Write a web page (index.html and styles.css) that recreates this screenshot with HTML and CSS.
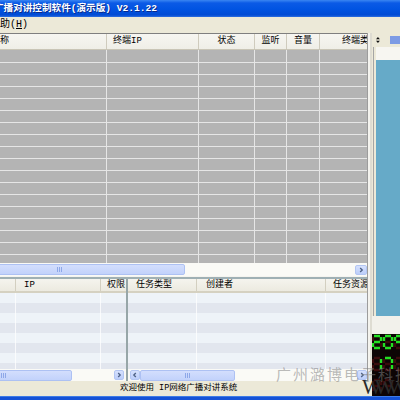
FILE: index.html
```html
<!DOCTYPE html>
<html>
<head>
<meta charset="utf-8">
<link rel="stylesheet" href="styles.css">
</head>
<body>
<div class="titlebar"><span class="title">广播对讲控制软件(演示版) V2.1.22</span></div>
<div class="menubar"><span class="menu">帮助(<u>H</u>)</span></div>
<div class="content">
  <div class="leftwrap">
    <div class="work">
      <div class="leftcol">
        <div class="ghead">
          <div class="hc h1">名称</div>
          <div class="hc h2">终端IP</div>
          <div class="hc hcen">状态</div>
          <div class="hc hcen">监听</div>
          <div class="hc hcen">音量</div>
          <div class="hc h6">终端类型</div>
        </div>
        <div class="gbody">
          <div class="gc"></div><div class="gc"></div><div class="gc"></div><div class="gc"></div><div class="gc"></div><div class="gc last"></div>
        </div>
        <div class="hscroll">
          <div class="thumb t-up"><span class="grip"></span></div>
          <div class="track"></div>
          <div class="sbtn"><svg width="12" height="10" viewBox="0 0 12 10"><path d="M5 2.5L7.5 5L5 7.5" fill="none" stroke="#4d6185" stroke-width="1.6"/></svg></div>
        </div>
        <div class="hsplit"></div>
        <div class="lower">
          <div class="lp">
            <div class="lhead lhead-l">
              <div class="lh"></div>
              <div class="lh pad8">IP</div>
              <div class="lh pad6">权限</div>
            </div>
            <div class="lrows lrows-l"><div class="lc"></div><div class="lc"></div><div class="lc last"></div></div>
            <div class="lscroll">
              <div class="thumb t-ll"><span class="grip"></span></div>
              <div class="track"></div>
              <div class="sbtn"><svg width="10" height="10" viewBox="0 0 10 10"><path d="M4 2.5L6.5 5L4 7.5" fill="none" stroke="#4d6185" stroke-width="1.6"/></svg></div>
            </div>
          </div>
          <div class="vsplit"></div>
          <div class="rp">
            <div class="lhead lhead-r">
              <div class="lh pad8">任务类型</div>
              <div class="lh pad9">创建者</div>
              <div class="lh pad7">任务资源</div>
            </div>
            <div class="lrows lrows-r"><div class="lc"></div><div class="lc"></div><div class="lc last"></div></div>
            <div class="lscroll rscroll">
              <div class="sbtn"><svg width="10" height="10" viewBox="0 0 10 10"><path d="M6 2.5L3.5 5L6 7.5" fill="none" stroke="#4d6185" stroke-width="1.6"/></svg></div>
              <div class="thumb t-rl"><span class="grip"></span></div>
              <div class="track"></div>
              <div class="sbtn"><svg width="10" height="10" viewBox="0 0 10 10"><path d="M4 2.5L6.5 5L4 7.5" fill="none" stroke="#4d6185" stroke-width="1.6"/></svg></div>
            </div>
          </div>
        </div>
      </div>
      <div class="strip"></div>
    </div>
    <div class="status"><span class="stext">欢迎使用 IP网络广播对讲系统</span></div>
  </div>
  <div class="side">
    <div class="shead">
      <svg class="sicon" width="5" height="8" viewBox="0 0 5 8"><path d="M2.5 0L5 3H0Z M0 5H5L2.5 8Z" fill="#111"/></svg>
      <div class="sbar"></div>
    </div>
    <div class="sbox">
      <div class="swhite"></div>
      <div class="teal"></div>
    </div>
    <div class="slight"></div>
    <div class="led">
      <svg width="28" height="62" viewBox="0 0 28 62">
        <path d="M2 2H8M9 3V7M9 9V13M2 14H8M1 9V13M1 3V7M2 8H8 M13 2H19M20 3V7M20 9V13M13 14H19M12 9V13M12 3V7M13 8H19 M24 2H30M23 9V13M23 3V7M24 8H30M24 14H30 M2 24H8M9 25V29M9 31V35M2 36H8M1 31V35M1 25V29M2 30H8 M13 24H19M20 25V29M20 31V35M13 36H19M12 31V35M12 25V29M13 30H19 M24 24H30M23 31V35M23 25V29M24 30H30M24 36H30 M2 46H8M9 47V51M9 53V57M1 53V57M1 47V51M2 52H8M13 46H19M20 47V51M12 47V51M13 52H19" fill="none" stroke="#3a0c0c" stroke-width="2.4"/>
        <path d="M2 2H8M9 3V7M2 8H8M1 9V13M2 14H8 M13 2H19M20 3V7M20 9V13M13 14H19M12 9V13M12 3V7 M24 2H30M23 3V7M24 8H30 M9 25V29M9 31V35 M13 24H19M20 25V29M20 31V35" fill="none" stroke="#22e022" stroke-width="2.4"/>
      </svg>
    </div>
  </div>
</div>
<div class="taskbar"></div>
<div class="wm">广州潞博电子科技</div>
<div class="www">WWW</div>
</body>
</html>
```
FILE: styles.css
```css
* { box-sizing: border-box; margin: 0; padding: 0; }
html, body { width: 400px; height: 400px; overflow: hidden; }
body {
  position: relative;
  background: #ECE9D8;
  font-family: "Liberation Mono", "Noto Sans CJK SC", monospace;
  font-size: 9px;
  color: #000;
}
.titlebar {
  height: 17px;
  background: linear-gradient(#3a86f2 0, #0b5ae6 3px, #0154e2 9px, #014bd4 15px, #2f6fe0 17px);
  color: #fff;
  font-weight: bold;
  font-size: 9.6px;
  line-height: 17px;
  white-space: nowrap;
  overflow: hidden;
}
.title { display: inline-block; margin-left: -6px; letter-spacing: 0; text-shadow: 1px 1px 0 #0a2a8a; }
.menubar { height: 16px; line-height: 16px; font-size: 10px; white-space: nowrap; overflow: hidden; }
.menu { display: inline-block; margin-left: -10px; }
.content { display: flex; height: 363px; }
.leftwrap { width: 372px; display: flex; flex-direction: column; }
.work { display: flex; height: 348px; }
.leftcol { width: 367px; display: flex; flex-direction: column; border-top: 1px solid #7f7f7f; }
.strip { width: 5px; background: linear-gradient(90deg, #9c9c9c 0 1px, #f4f3ee 1px 3px, #dedcd2 3px); }

.ghead {
  height: 16px;
  display: grid;
  grid-template-columns: 107px 92px 56px 32px 33px 47px;
  background: linear-gradient(#f7f6f1, #efeee7);
  border-bottom: 1px solid #c9c5b6;
  white-space: nowrap;
  overflow: hidden;
}
.hc { border-right: 1px solid #cfcbbd; line-height: 15px; overflow: hidden; }
.hc:last-child { border-right: 0; }
.h1 { text-indent: -9px; overflow: visible; }
.h2 { padding-left: 6px; }
.hcen { text-align: center; }
.h6 { padding-left: 22px; }

.gbody {
  height: 213px;
  display: grid;
  grid-template-columns: 107px 92px 56px 32px 33px 47px;
  background: repeating-linear-gradient(#b4b4b4 0 11px, #e6e6e6 11px 12px);
  background-position: 0 1px;
}
.gc { border-right: 1px solid #e6e6e6; }
.gc.last { border-right: 0; }

.hscroll { height: 13px; display: flex; align-items: center; background: #fafaf6; overflow: hidden; }
.thumb {
  height: 11px;
  flex: none;
  display: flex;
  align-items: center;
  justify-content: center;
  background: linear-gradient(#d3defd, #c2d2fb);
  border: 1px solid #adc1f3;
  border-radius: 2px;
}
.t-up { margin-left: -65px; width: 250px; }
.grip { width: 6px; height: 5px; background: repeating-linear-gradient(90deg, #8ea8e8 0 1px, transparent 1px 2px); }
.track { flex: 1; }
.sbtn {
  flex: none;
  width: 12px;
  height: 10px;
  display: flex;
  align-items: center;
  justify-content: center;
  background: linear-gradient(#d6e1fd, #bccefa);
  border: 1px solid #b3c6f3;
  border-radius: 2px;
}
.sbtn svg { display: block; }

.hsplit { height: 3px; background: linear-gradient(#f5f4ef 0 1px, #9fb0b4 1px); }
.lower { height: 102px; display: flex; }
.lp { width: 126px; display: flex; flex-direction: column; overflow: hidden; }
.vsplit { width: 2px; background: #97a6a8; }
.rp { flex: 1; display: flex; flex-direction: column; overflow: hidden; }

.lhead {
  height: 14px;
  display: grid;
  background: linear-gradient(#f5f4ee, #eceae0);
  border-bottom: 2px solid #d5d1c1;
  white-space: nowrap;
}
.lhead-l, .lrows-l { grid-template-columns: 16px 85px 25px; }
.lhead-r, .lrows-r { grid-template-columns: 69px 129px 41px; }
.lh { border-right: 1px solid #d3cfc0; line-height: 12px; overflow: hidden; }
.lh:last-child { border-right: 0; }
.pad6 { padding-left: 6px; }
.pad7 { padding-left: 7px; }
.pad8 { padding-left: 8px; }
.pad9 { padding-left: 9px; }

.lrows {
  height: 76px;
  display: grid;
  background: repeating-linear-gradient(#eef3f8 0 10px, #e2e6ee 10px 20px);
}
.lc { border-right: 1px solid rgba(255, 255, 255, 0.75); }
.lc.last { border-right: 0; }

.lscroll { height: 12px; display: flex; align-items: center; background: #fafaf6; }
.lscroll .sbtn { width: 10px; }
.t-ll { margin-left: -64px; width: 136px; }
.lp .lscroll .sbtn { margin-right: 2px; }
.rscroll .sbtn:first-child { margin-left: 2px; }
.t-rl { width: 95px; }

.status { height: 15px; line-height: 15px; font-size: 8.5px; white-space: nowrap; }
.stext { margin-left: 120px; }

.side { width: 28px; display: flex; flex-direction: column; }
.shead { height: 14px; display: flex; align-items: center; padding-left: 4px; }
.sicon { display: block; }
.sbar { margin-left: 10px; width: 13px; height: 8px; background: #7d9be4; }
.sbox { margin-left: 1px; border-left: 1px solid #a5a5a5; padding-left: 2px; }
.swhite { height: 13px; background: #f7f6f1; }
.teal { height: 256px; background: #66aac8; }
.slight { height: 18px; background: #f2f1eb; }
.led { height: 62px; background: #0d0505; overflow: hidden; }
.led svg { display: block; }

.taskbar { height: 4px; background: linear-gradient(#3d7be6 0 1px, #1552d6 1px); }

.wm {
  position: absolute;
  left: 276px;
  top: 364px;
  font-family: "Noto Sans CJK SC", sans-serif;
  font-size: 15px;
  line-height: 20px;
  letter-spacing: 2px;
  color: rgba(130, 130, 130, 0.55);
  white-space: nowrap;
}
.www {
  position: absolute;
  left: 362px;
  top: 376px;
  font-family: "Liberation Serif", serif;
  font-size: 21px;
  line-height: 22px;
  letter-spacing: -7px;
  color: #2a2a2a;
  white-space: nowrap;
}
```
